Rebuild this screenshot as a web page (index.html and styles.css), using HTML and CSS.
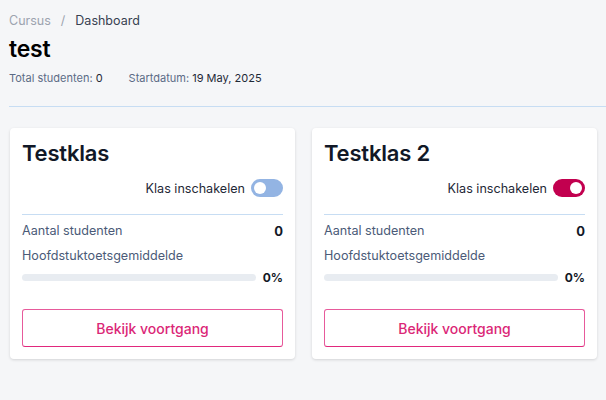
FILE: index.html
```html
<!DOCTYPE html>
<html>
<head>
<meta charset="utf-8">
<link rel="stylesheet" href="styles.css">
</head>
<body>
<div class="page">
  <header class="header">
    <nav class="crumbs"><span class="crumb-muted">Cursus</span><span class="sep">/</span><span class="crumb-current">Dashboard</span></nav>
    <h1 class="title">test</h1>
    <div class="stats">
      <span class="stat"><span class="stat-label">Total studenten:</span> <span class="stat-value">0</span></span>
      <span class="stat"><span class="stat-label">Startdatum:</span> <span class="stat-value">19 May, 2025</span></span>
    </div>
  </header>
  <div class="cards">
    <section class="card">
      <h2 class="card-title">Testklas</h2>
      <div class="toggle-row"><span>Klas inschakelen</span><span class="toggle off"><span class="knob"></span></span></div>
      <div class="row first"><span class="label">Aantal studenten</span><span class="value">0</span></div>
      <div class="row"><span class="label">Hoofdstuktoetsgemiddelde</span></div>
      <div class="progress-row"><div class="bar"><div class="fill" style="width:0%"></div></div><span class="value pct">0%</span></div>
      <button class="btn">Bekijk voortgang</button>
    </section>
    <section class="card">
      <h2 class="card-title">Testklas 2</h2>
      <div class="toggle-row"><span>Klas inschakelen</span><span class="toggle on"><span class="knob"></span></span></div>
      <div class="row first"><span class="label">Aantal studenten</span><span class="value">0</span></div>
      <div class="row"><span class="label">Hoofdstuktoetsgemiddelde</span></div>
      <div class="progress-row"><div class="bar"><div class="fill" style="width:0%"></div></div><span class="value pct">0%</span></div>
      <button class="btn">Bekijk voortgang</button>
    </section>
  </div>
</div>
</body>
</html>
```
FILE: styles.css
```css
* { box-sizing: border-box; }
html, body { margin: 0; padding: 0; }
body {
  background: #f5f6f8;
  font-family: Inter, "Noto Sans", sans-serif;
  color: #1f2937;
  width: 606px;
  height: 400px;
  overflow: hidden;
}
.page { padding: 13px 9px 0 9px; }
.header {
  margin-right: -9px;
  border-bottom: 1px solid #c7ddf3;
  padding-bottom: 21px;
}
.crumbs { font-size: 12.5px; line-height: 16px; color: #9ca3af; display: flex; align-items: center; }
.sep { margin: 0 10px; color: #9ca3af; }
.crumb-current { color: #374151; }
.title { margin: 5px 0 0 0; font-size: 23px; line-height: 30px; font-weight: 600; color: #000; letter-spacing: -0.2px; }
.stats { margin-top: 7px; font-size: 11px; line-height: 14px; display: flex; gap: 26px; }
.stat-label { color: #5b6b86; }
.stat-value { color: #1f2937; }
.cards {
  margin-top: 21px;
  margin-left: 1px;
  display: flex;
  gap: 17px;
}
.card {
  width: 285px;
  background: #fff;
  border-radius: 4px;
  box-shadow: 0 1px 3px rgba(0,0,0,0.14);
  padding: 10px 12px 12px 12px;
}
.card-title { margin: 0; font-size: 22px; line-height: 30px; font-weight: 600; color: #111827; letter-spacing: -0.2px; }
.toggle-row {
  margin-top: 11px;
  display: flex;
  justify-content: flex-end;
  align-items: center;
  gap: 6px;
  font-size: 12.6px;
  color: #1f2937;
  padding-bottom: 17px;
  border-bottom: 1px solid #c7ddf3;
}
.toggle { width: 32px; height: 18px; border-radius: 9px; position: relative; display: inline-block; }
.toggle.off { background: #93b4e3; }
.toggle.on { background: #c2004f; }
.knob { position: absolute; top: 3px; width: 12px; height: 12px; border-radius: 50%; background: #fff; }
.toggle.off .knob { left: 3px; }
.toggle.on .knob { right: 3px; }
.row { display: flex; justify-content: space-between; align-items: center; font-size: 12.6px; line-height: 18px; margin-top: 7px; }
.row.first { margin-top: 7px; }
.label { color: #4b5b78; }
.value { color: #111827; font-weight: 700; font-size: 13px; }
.value.pct { font-size: 12px; }
.progress-row { display: flex; align-items: center; gap: 7px; margin-top: 5px; }
.bar { flex: 1; height: 7px; border-radius: 4px; background: #e8ecf1; overflow: hidden; }
.fill { height: 100%; background: #c2004f; }
.btn {
  margin-top: 24px;
  width: 100%;
  height: 38px;
  background: #fff;
  border: 1px solid #e75a9b;
  border-bottom-color: #e1287d;
  border-radius: 3px;
  color: #db2777;
  font-family: Inter, "Noto Sans", sans-serif;
  font-size: 14px;
  font-weight: 500;
  display: block;
}
```
